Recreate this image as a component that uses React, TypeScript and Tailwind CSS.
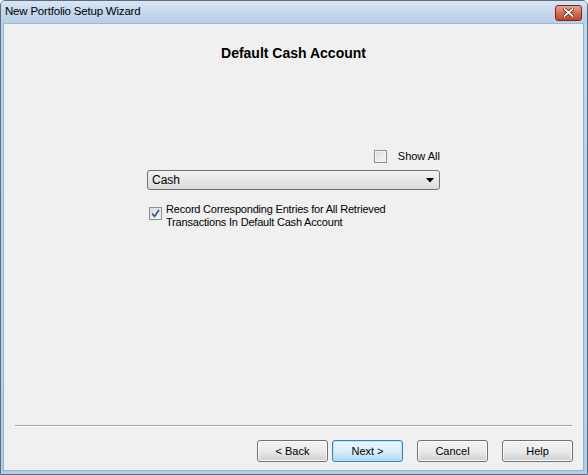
import React, { useState } from 'react';

const font = { fontFamily: '"Liberation Sans", Arial, sans-serif' };

const WinButton = ({ label, primary }: { label: string; primary?: boolean }) => (
    <button
        className={
            'h-[22px] w-[71px] rounded-[3px] border text-[11px] text-black ' +
            (primary
                ? 'border-[#3c7fb1] bg-gradient-to-b from-[#eaf6fd] via-[#d9f0fc] to-[#a7d9f5] shadow-[inset_0_0_0_1px_#b6e3fa]'
                : 'border-[#707070] bg-gradient-to-b from-[#f2f2f2] via-[#ebebeb] to-[#cfcfcf] shadow-[inset_0_0_0_1px_#fcfcfc]')
        }
    >
        {label}
    </button>
);

const App: React.FC = () => {
    const [showAll, setShowAll] = useState(false);
    const [record, setRecord] = useState(true);

    return (
        <div style={font} className="w-[588px] h-[475px] flex flex-col border border-[#5a6d82] rounded-t-[5px] bg-gradient-to-b from-[#c2d6eb] to-[#b4cde6] overflow-hidden">
            {/* title bar */}
            <div className="h-[22px] flex items-center justify-between pl-[4px] pr-[5px] bg-gradient-to-b from-[#dae6f3] via-[#c4d7ec] to-[#b8cfe8]">
                <span className="text-[11.5px] tracking-[-0.2px] text-black">New Portfolio Setup Wizard</span>
                <div className="w-[27px] h-[16px] mt-[1px] rounded-[3px] border border-[#6d2a1f] bg-gradient-to-b from-[#e8a493] via-[#d26f55] to-[#c1432a] flex items-center justify-center">
                    <svg width="11" height="9" viewBox="0 0 11 9">
                        <path d="M1.5 1 L9.5 8 M9.5 1 L1.5 8" stroke="#3b1a14" strokeWidth="3.2" strokeLinecap="square" />
                        <path d="M1.5 1 L9.5 8 M9.5 1 L1.5 8" stroke="#ffffff" strokeWidth="1.8" strokeLinecap="square" />
                    </svg>
                </div>
            </div>

            {/* client area */}
            <div className="flex-1 ml-[2px] mr-[3px] mb-[3px] bg-[#f0f0f0] border border-[#8fb4d6] border-t-[#9cb8d4] flex flex-col">
                <div className="pt-[21px] text-center text-[14px] leading-[17px] font-bold text-black">Default Cash Account</div>

                <div className="mt-[88px] w-[293px] mx-auto flex flex-col text-[11px] text-black">
                    <label className="self-end flex items-center gap-[11px] h-[12px]">
                        <span
                            onClick={() => setShowAll(!showAll)}
                            className="w-[13px] h-[13px] border border-[#8f8f8f] bg-gradient-to-br from-[#dcdcdc] to-[#f6f6f6] shadow-[inset_0_0_0_1px_#f4f4f4]"
                        />
                        <span className="leading-[12px]">Show All</span>
                    </label>

                    <div className="mt-[8px] h-[20px] w-[293px] rounded-[3px] border border-[#707070] bg-gradient-to-b from-[#f2f2f2] to-[#dcdcdc] flex items-center justify-between pl-[4px] pr-[5px]">
                        <span className="text-[12px]">Cash</span>
                        <svg width="8" height="5" viewBox="0 0 8 5"><path d="M0 0 H8 L4 4.5 Z" fill="#000" /></svg>
                    </div>

                    <label className="mt-[13px] ml-[2px] flex items-start gap-[4px]">
                        <span
                            onClick={() => setRecord(!record)}
                            className="mt-[4px] w-[13px] h-[13px] shrink-0 border border-[#8f8f8f] bg-gradient-to-br from-[#dcdcdc] to-[#f6f6f6] flex items-center justify-center"
                        >
                            {record && (
                                <svg width="9" height="9" viewBox="0 0 9 9">
                                    <path d="M1 4.5 L3.5 7.5 L8 1" stroke="#2e4e9e" strokeWidth="1.6" fill="none" />
                                </svg>
                            )}
                        </span>
                        <span className="leading-[13px] tracking-[-0.2px]">
                            Record Corresponding Entries for All Retrieved
                            <br />
                            Transactions In Default Cash Account
                        </span>
                    </label>
                </div>

                <div className="flex-1" />

                <div className="mx-[11px] h-[2px] border-t border-[#a0a0a0] border-b border-b-white" />

                <div className="flex justify-end items-center pr-[10px] pt-[13px] pb-[8px]">
                    <WinButton label="< Back" />
                    <div className="w-[4px]" />
                    <WinButton label="Next >" primary />
                    <div className="w-[14px]" />
                    <WinButton label="Cancel" />
                    <div className="w-[14px]" />
                    <WinButton label="Help" />
                </div>
            </div>
        </div>
    );
};

export default App;
